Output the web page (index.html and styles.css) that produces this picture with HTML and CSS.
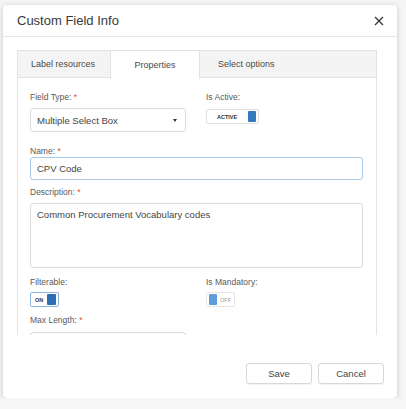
FILE: index.html
```html
<!DOCTYPE html>
<html lang="en">
<head>
  <meta charset="UTF-8" />
  <title>Custom Field Info</title>
  <link rel="stylesheet" href="styles.css">
</head>
<body>

  <div class="modal" role="dialog" aria-label="Custom Field Info">
    <div class="modal-header">
      <h1 class="modal-title">Custom Field Info</h1>
      <button class="close" aria-label="Close">
        <svg width="10" height="10" viewBox="0 0 10 10">
          <path d="M1 1 L9 9 M9 1 L1 9" stroke="#333" stroke-width="1.3" fill="none" />
        </svg>
      </button>
    </div>

    <div class="modal-body">
      <div class="tabs">
        <div class="tab tab-label">Label resources</div>
        <div class="tab tab-props active">Properties</div>
        <div class="tab tab-options">Select options</div>
        <div class="tab-fill"></div>
      </div>

      <div class="panel">
        <div class="row two-col">
          <div class="field">
            <label>Field Type: <span class="req">*</span></label>
            <div class="select">
              <span>Multiple Select Box</span>
              <span class="caret"></span>
            </div>
          </div>
          <div class="field">
            <label>Is Active:</label>
            <div class="toggle toggle-active">
              <span class="toggle-text">ACTIVE</span>
              <span class="knob"></span>
            </div>
          </div>
        </div>

        <div class="row name-row">
          <label>Name: <span class="req">*</span></label>
          <div class="input focused">CPV Code</div>
        </div>

        <div class="row desc-row">
          <label>Description: <span class="req">*</span></label>
          <div class="textarea">Common Procurement Vocabulary codes</div>
        </div>

        <div class="row two-col flag-row">
          <div class="field">
            <label>Filterable:</label>
            <div class="toggle toggle-on">
              <span class="toggle-text">ON</span>
              <span class="knob"></span>
            </div>
          </div>
          <div class="field">
            <label>Is Mandatory:</label>
            <div class="toggle toggle-off">
              <span class="knob"></span>
              <span class="toggle-text">OFF</span>
            </div>
          </div>
        </div>

        <div class="row max-row">
          <label>Max Length: <span class="req">*</span></label>
          <div class="input short"></div>
        </div>
      </div>
    </div>

    <div class="modal-footer">
      <button class="btn">Save</button>
      <button class="btn">Cancel</button>
    </div>
  </div>

</body>
</html>
```

FILE: styles.css
```css
* {
  box-sizing: border-box;
  font-family: 'Liberation Sans', Arial, sans-serif;
}

body {
  margin: 0;
  background: #f6f6f6;
  padding: 5px 0 0 3px;
}

.modal {
  width: 394px;
  height: 393px;
  background: #fff;
  border-radius: 4px;
  box-shadow: 0 1px 6px rgba(0, 0, 0, 0.18);
  display: flex;
  flex-direction: column;
}

.modal-header {
  height: 32px;
  border-bottom: 1px solid #e6e6e6;
  display: flex;
  align-items: center;
  justify-content: space-between;
  padding: 0 13px 0 14px;
}

.modal-title {
  margin: 0;
  font-size: 13px;
  font-weight: normal;
  color: #3a3a3a;
}

.close {
  border: none;
  background: none;
  padding: 0;
  width: 10px;
  height: 10px;
  display: flex;
  cursor: pointer;
}

.modal-body {
  padding: 13px 20px 0 14px;
}

/* Tab strip */
.tabs {
  display: flex;
  height: 28px;
  background: #f4f4f4;
  border: 1px solid #e2e2e2;
}

.tab {
  font-size: 9px;
  color: #4a4a4a;
  display: flex;
  align-items: center;
  justify-content: center;
}

.tab-label {
  width: 92px;
  padding-right: 2px;
}

.tab-props {
  width: 90px;
}

.tab-options {
  width: 94px;
  justify-content: flex-start;
  padding-left: 18px;
}

.tab.active {
  background: #fff;
  border-left: 1px solid #e2e2e2;
  border-right: 1px solid #e2e2e2;
  height: 28px;
  margin-bottom: -1px;
}

.tab-fill {
  flex: 1;
}

/* Form panel, clipped like a scrolled area */
.panel {
  height: 257px;
  overflow: hidden;
  border-left: 1px solid #e4e4e4;
  border-right: 1px solid #e4e4e4;
  padding: 13px 13px 0 12px;
}

.row label {
  display: block;
  font-size: 8.5px;
  line-height: 12px;
  color: #5a5a5a;
}

.req {
  color: #e5483f;
}

.two-col {
  display: grid;
  grid-template-columns: 156px 1fr;
  column-gap: 20px;
}

.select {
  margin-top: 5px;
  height: 24px;
  border: 1px solid #dcdcdc;
  border-radius: 3px;
  display: flex;
  align-items: center;
  justify-content: space-between;
  padding: 0 8px 0 6px;
  font-size: 9.5px;
  color: #444;
}

.caret {
  width: 0;
  height: 0;
  border-left: 2.5px solid transparent;
  border-right: 2.5px solid transparent;
  border-top: 3px solid #333;
}

.input {
  height: 23px;
  border: 1px solid #dcdcdc;
  border-radius: 3px;
  display: flex;
  align-items: center;
  padding: 0 6px;
  font-size: 9.5px;
  color: #444;
}

.input.focused {
  border-color: #a9c9ea;
}

.name-row {
  margin-top: 13px;
}

.desc-row {
  margin-top: 6px;
}

.textarea {
  margin-top: 5px;
  height: 65px;
  border: 1px solid #dcdcdc;
  border-radius: 3px;
  padding: 5px 6px;
  font-size: 9.5px;
  line-height: 12px;
  color: #444;
}

.flag-row {
  margin-top: 8px;
}

.max-row {
  margin-top: 7px;
}

.max-row .input {
  margin-top: 6px;
  width: 156px;
}

/* Switches */
.toggle {
  margin-top: 4px;
  height: 15px;
  display: flex;
  align-items: center;
  border: 1px solid #e0e0e0;
  border-radius: 2px;
  background: #fff;
  padding: 0 2px;
}

.toggle-text {
  font-size: 5.5px;
  font-weight: bold;
  color: #333;
}

.knob {
  width: 8px;
  height: 11px;
  border-radius: 1px;
  background: #3379c0;
}

.toggle-active {
  margin-top: 6px;
  width: 53px;
  justify-content: space-between;
  padding-left: 10px;
}

.toggle-on {
  width: 29px;
  justify-content: space-between;
  padding-left: 4px;
  border-color: #8db6e0;
}

.toggle-on .knob {
  width: 9px;
  background: #2c6db3;
}

.toggle-off {
  width: 29px;
  gap: 3px;
  border-color: #e6e6e6;
}

.toggle-off .knob {
  background: #5e9cda;
}

.toggle-off .toggle-text {
  font-weight: normal;
  color: #999;
}

/* Footer buttons */
.modal-footer {
  flex: 1;
  display: flex;
  justify-content: flex-end;
  align-items: flex-start;
  gap: 6px;
  padding: 28px 13px 0 0;
}

.btn {
  width: 66px;
  height: 21px;
  background: #fff;
  border: 1px solid #d8d8d8;
  border-radius: 3px;
  box-shadow: 0 1px 1px rgba(0, 0, 0, 0.05);
  font-size: 9.5px;
  color: #444;
  cursor: pointer;
}
```
